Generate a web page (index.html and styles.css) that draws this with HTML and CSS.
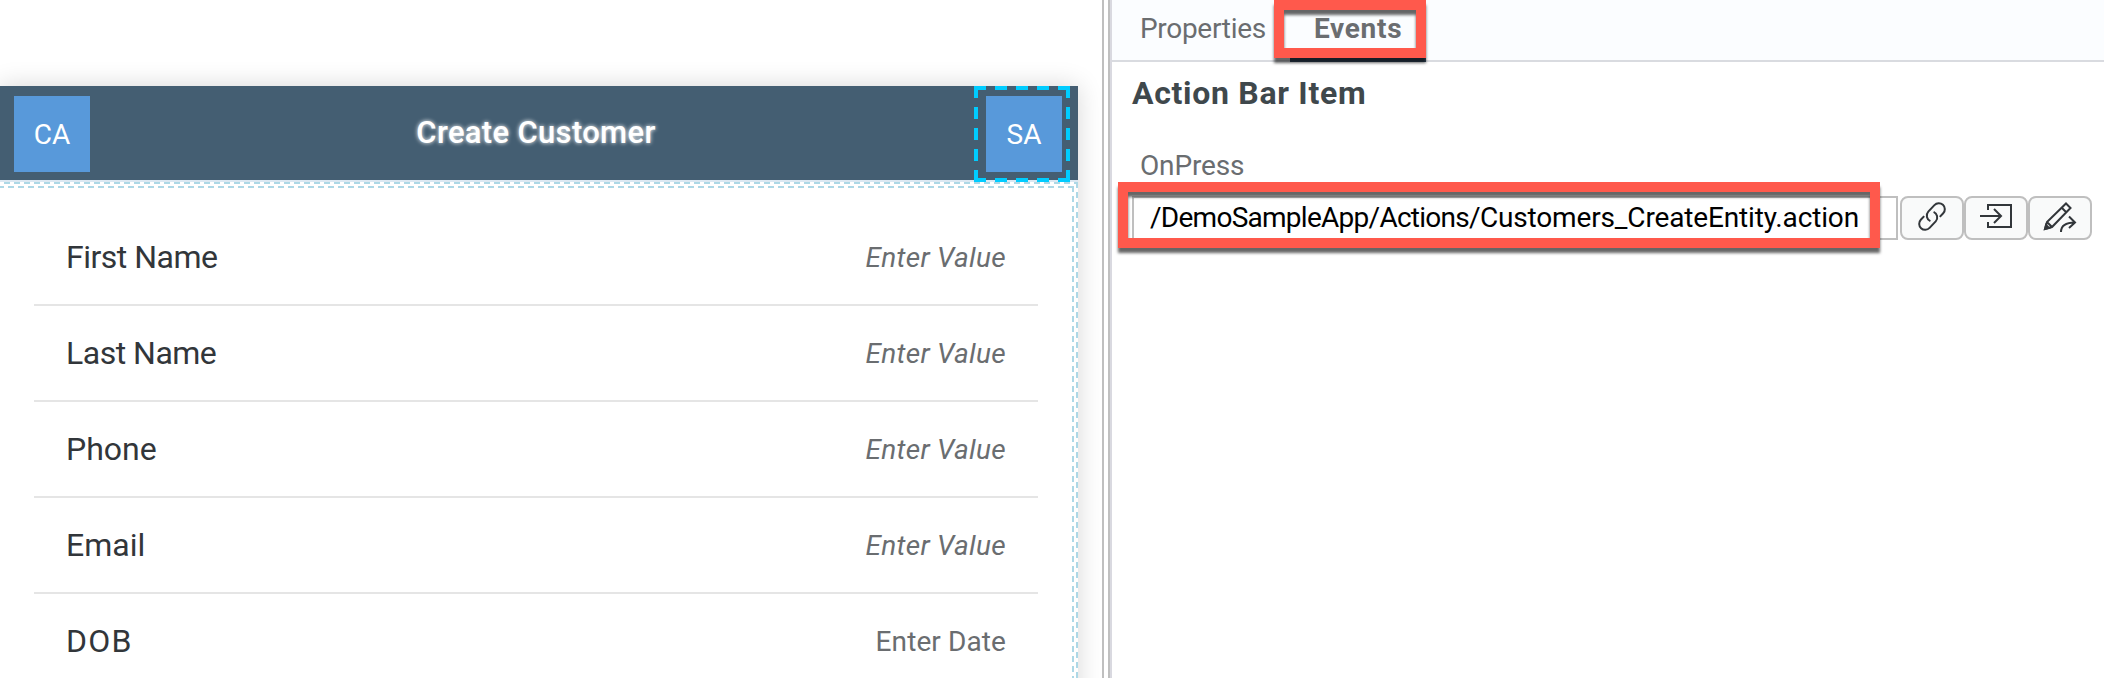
FILE: index.html
```html
<!DOCTYPE html>
<html lang="en">
<head>
<meta charset="utf-8">
<title>Create Customer</title>
<link rel="stylesheet" href="styles.css">
</head>
<body>
<div class="app">
  <section class="canvas">
    <div class="phone">
      <header class="bar">
        <div class="chip">CA</div>
        <h1 class="title">Create Customer</h1>
        <div class="chip picked">SA
          <svg class="outline" viewBox="0 0 96 96"><path d="M0 2H96M0 94H96M2 0V96M94 0V96"/></svg>
        </div>
      </header>
      <div class="form">
        <div class="row"><span class="label">First Name</span><span class="value">Enter Value</span></div>
        <div class="row"><span class="label">Last Name</span><span class="value">Enter Value</span></div>
        <div class="row"><span class="label even">Phone</span><span class="value">Enter Value</span></div>
        <div class="row"><span class="label even">Email</span><span class="value">Enter Value</span></div>
        <div class="row"><span class="label caps">DOB</span><span class="value date">Enter Date</span></div>
      </div>
    </div>
  </section>
  <div class="splitter"></div>
  <aside class="panel">
    <nav class="tabs">
      <span class="tab">Properties</span>
      <span class="tab active">Events<i class="mark mark-tab"></i></span>
    </nav>
    <h2 class="heading">Action Bar Item</h2>
    <div class="field-label">OnPress</div>
    <div class="field">
      <div class="input"><span class="folder">/DemoSampleApp/Actions/</span><span class="file">Customers_CreateEntity.action</span></div>
      <button class="btn"><svg viewBox="0 0 60 40"><g transform="translate(30 18.500) rotate(-47)"><path d="M-5 -6H-10A6 6 0 0 0 -10 6H-1A6 6 0 0 0 4.500 -2M5 6H10A6 6 0 0 0 10 -6H1A6 6 0 0 0 -4.500 2"/></g></svg></button>
      <button class="btn"><svg viewBox="0 0 60 40"><path d="M22 12V7H45V29H22V24M14 18H35M28 11L35 18L28 25"/></svg></button>
      <button class="btn"><svg viewBox="0 0 60 40"><path d="M15 31L17 24L36 5.500L40.500 10L22 29ZM31.500 9.500L36.500 14.500M17 24L22 29M31 34C31 28 35 24.500 45 24.500M39 18.500L45 24.500L39 30"/><path class="solid" d="M15 31L16 27L19 30Z"/></svg></button>
      <i class="mark mark-field"></i>
    </div>
  </aside>
</div>
</body>
</html>
```
FILE: styles.css
```css
* { box-sizing: border-box; }
body {
  margin: 0;
  background: #fff;
  font-family: Roboto, "Liberation Sans", sans-serif;
  font-size: 28px;
  overflow: hidden;
}
h1, h2 { margin: 0; }
.app { display: flex; width: 2104px; height: 678px; overflow: hidden; }
.canvas { width: 1102px; padding-top: 86px; overflow: hidden; }
.phone { width: 1078px; height: 620px; background: #fff; box-shadow: 0 0 24px rgba(0, 0, 0, .16); }
.bar {
  display: flex;
  justify-content: space-between;
  height: 94px;
  padding: 10px 16px 8px 14px;
  background: #445e72;
  color: #fff;
}
.chip {
  position: relative;
  width: 76px;
  height: 76px;
  line-height: 77px;
  text-align: center;
  background: #5899da;
}
.title {
  padding-right: 4px;
  font-size: 31px;
  font-weight: 500;
  line-height: 74px;
  letter-spacing: .33px;
  text-shadow: 0 0 4px #fff;
}
.outline {
  position: absolute;
  left: -12px;
  top: -10px;
  width: 96px;
  height: 96px;
  fill: none;
  stroke: #0cf;
  stroke-width: 4;
  stroke-dasharray: 12 9;
}
.form {
  height: 510px;
  padding: 30px 40px 0 34px;
  border-top: 2px solid #dbe8f2;
  background:
    linear-gradient(90deg, #add8e6 6px, transparent 6px) 4px 0 / 10px 2px repeat-x,
    linear-gradient(#add8e6 6px, transparent 6px) 1076px 0 / 2px 10px repeat-y,
    linear-gradient(#fff, #fff) 1074px 4px / 4px 2px no-repeat,
    linear-gradient(90deg, #add8e6 6px, transparent 6px) -2px 4px / 10px 2px repeat-x,
    linear-gradient(#add8e6 6px, transparent 6px) 1072px 4px / 2px 10px repeat-y;
}
.row {
  display: flex;
  justify-content: space-between;
  height: 96px;
  padding: 0 32px;
  border-bottom: 2px solid #e5e5e5;
}
.row:first-child { height: 94px; }
.label { font-size: 32px; line-height: 94px; letter-spacing: -.5px; color: #32363a; }
.value { font-style: italic; line-height: 96px; letter-spacing: .3px; color: #6a6d70; }
.row:first-child .label { line-height: 90px; }
.row:first-child .value { line-height: 92px; }
.even { letter-spacing: 0; }
.caps { letter-spacing: 1.3px; }
.date { font-style: normal; letter-spacing: .1px; }
.splitter {
  width: 10px;
  border-left: 2px solid #bfbfbf;
  border-right: 2px solid #d9d9e0;
  box-shadow: inset -2px 0 #bfbfbf;
}
.panel { width: 992px; }
.tabs {
  display: flex;
  height: 62px;
  background: #fbfdff;
  border-bottom: 2px solid #d9dbe0;
  padding-left: 28px;
  color: #6a6d70;
  line-height: 57px;
}
.tab { width: 150px; letter-spacing: -.3px; }
.active {
  position: relative;
  width: 136px;
  height: 62px;
  padding-left: 24px;
  border-bottom: 4px solid #354a5f;
  font-weight: 700;
  letter-spacing: .7px;
}
.heading { padding: 9px 0 0 20px; font-size: 32px; line-height: 44px; letter-spacing: .7px; color: #3f484c; }
.field-label { padding: 35px 0 0 28px; line-height: 32px; letter-spacing: -.15px; color: #6a6d70; }
.field { position: relative; display: flex; margin: 14px 12px 0 20px; height: 44px; }
.input {
  width: 766px;
  margin-right: 2px;
  padding-left: 16px;
  border: 2px solid #bfbfbf;
  background: #fff;
  line-height: 40px;
  color: #000;
  white-space: nowrap;
}
.folder { letter-spacing: -.73px; }
.file { letter-spacing: -.15px; }
.btn {
  width: 64px;
  height: 44px;
  padding: 0;
  border: 2px solid #bfbfbf;
  border-radius: 8px;
  background: #f9fafa;
}
.btn svg { display: block; width: 60px; height: 40px; fill: none; stroke: #32363a; stroke-width: 2; }
.btn .solid { fill: #32363a; }
.mark {
  position: absolute;
  border: 10px solid #ff594c;
  filter: drop-shadow(0 5px 1.5px rgba(0, 0, 0, .6));
}
.mark-tab { left: -16px; top: 0; width: 152px; height: 58px; }
.mark-field { left: -14px; top: -14px; width: 762px; height: 66px; }
```
